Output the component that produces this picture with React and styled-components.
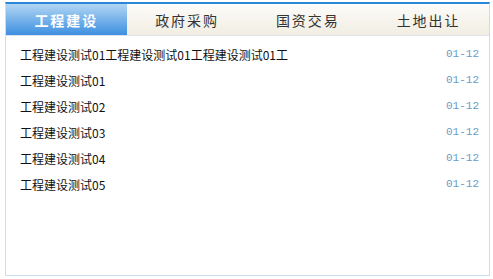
import React, { useState } from 'react';
import styled, { createGlobalStyle } from 'styled-components';

const Global = createGlobalStyle`
  body {
    margin: 0;
    background: #fff;
    font-family: "Noto Sans CJK SC", "Liberation Sans", sans-serif;
  }
`;

const Box = styled.div`
  margin: 2px 3px 0 5px;
  width: 485px;
  height: 274px;
  box-sizing: border-box;
  border: 1px solid #c9def0;
  border-top: 2px solid #2a87d8;
  display: flex;
  flex-direction: column;
`;

const Tabs = styled.div`
  display: grid;
  grid-template-columns: repeat(4, 1fr);
  height: 31px;
  background: linear-gradient(#fdfcfa, #f1ede2);
  border-bottom: 1px solid #dde3e8;
`;

const Tab = styled.div`
  display: flex;
  align-items: center;
  justify-content: center;
  font-size: 14px;
  letter-spacing: 2px;
  color: ${p => (p.$active ? '#fff' : '#333')};
  font-weight: ${p => (p.$active ? 'bold' : 'normal')};
  background: ${p => (p.$active ? 'linear-gradient(#b2d6f4, #3d8fe0)' : 'transparent')};
  cursor: pointer;
`;

const List = styled.ul`
  list-style: none;
  margin: 0;
  padding: 5px 10px 0 14px;
`;

const Row = styled.li`
  display: flex;
  justify-content: space-between;
  align-items: center;
  height: 26px;
  font-size: 12px;
  color: #111;
`;

const Date = styled.span`
  color: #6a9cc8;
  font-family: "Liberation Mono", monospace;
  font-size: 11px;
`;

const tabs = ['工程建设', '政府采购', '国资交易', '土地出让'];
const rows = [
  '工程建设测试01工程建设测试01工程建设测试01工',
  '工程建设测试01',
  '工程建设测试02',
  '工程建设测试03',
  '工程建设测试04',
  '工程建设测试05',
];

export default function App() {
  const [active, setActive] = useState(0);
  return (
    <>
      <Global />
      <Box>
        <Tabs>
          {tabs.map((t, i) => (
            <Tab key={t} $active={i === active} onClick={() => setActive(i)}>
              {t}
            </Tab>
          ))}
        </Tabs>
        <List>
          {rows.map((r, i) => (
            <Row key={i}>
              <span>{r}</span>
              <Date>01-12</Date>
            </Row>
          ))}
        </List>
      </Box>
    </>
  );
}
